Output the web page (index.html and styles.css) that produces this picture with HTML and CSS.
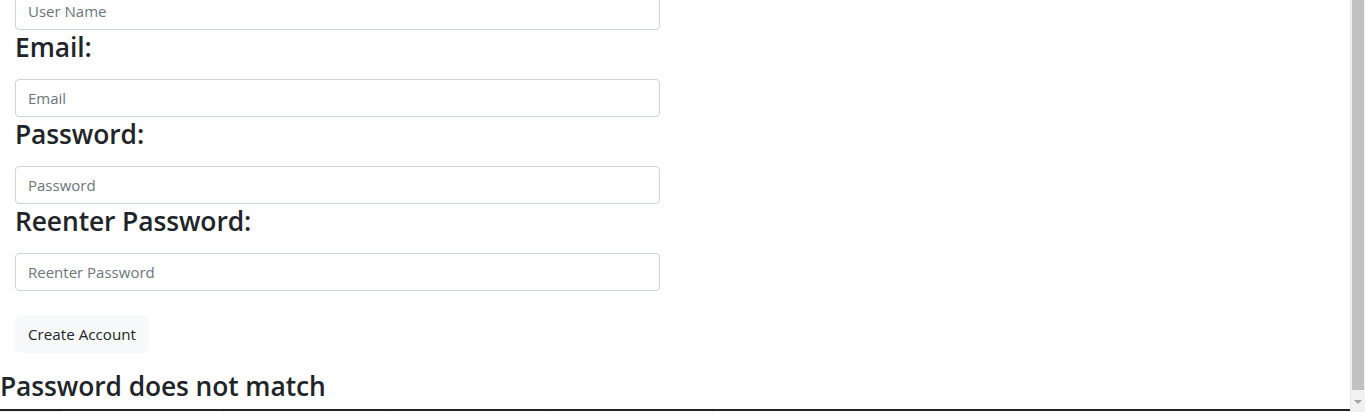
FILE: index.html
```html
<!DOCTYPE html>
<html lang="en">
<head>
<meta charset="utf-8">
<title>Create Account</title>
<link rel="stylesheet" href="styles.css">
</head>
<body>
<div class="page">
  <form class="signup">
    <input class="field" type="text" placeholder="User Name">
    <label class="field-label">Email:</label>
    <input class="field" type="email" placeholder="Email">
    <label class="field-label">Password:</label>
    <input class="field" type="password" placeholder="Password">
    <label class="field-label">Reenter Password:</label>
    <input class="field" type="password" placeholder="Reenter Password">
    <button class="btn-create" type="button">Create Account</button>
  </form>
  <h3 class="error">Password does not match</h3>
  <table class="list">
    <thead>
      <tr><th class="c1"></th><th></th><th></th><th></th><th></th><th class="rest"></th></tr>
    </thead>
  </table>
</div>
<div class="scrollbar"><div class="thumb"></div><div class="arrow"></div></div>
</body>
</html>
```

FILE: styles.css
```css
html, body {
  margin: 0;
  padding: 0;
  height: 100%;
  overflow: hidden;
  background: #fff;
}
body {
  font-family: "Open Sans", "Noto Sans", sans-serif;
  color: #212529;
}
.page {
  margin-top: -8px;
  width: 1350px;
}
.signup {
  display: flex;
  flex-direction: column;
  align-items: flex-start;
  padding: 0 15px;
}
.field {
  box-sizing: border-box;
  width: 645px;
  height: 38px;
  margin: 0;
  padding: 6px 12px;
  border: 1px solid #ced4da;
  border-radius: 4px;
  font-family: "Open Sans", sans-serif;
  font-size: 15px;
  color: #495057;
  background: #fff;
  outline: none;
}
.field::placeholder {
  color: #6c757d;
  opacity: 1;
}
.field-label {
  display: block;
  height: 34px;
  line-height: 34px;
  margin: 0 0 15px 0;
  font-size: 26.4px;
  font-weight: 600;
  letter-spacing: -0.1px;
}
.btn-create {
  margin-top: 24px;
  box-sizing: border-box;
  width: 134px;
  height: 38px;
  padding: 0 12px;
  border: 1px solid #f8f9fa;
  border-radius: 4px;
  background: #f8f9fa;
  color: #212529;
  font-family: "Open Sans", sans-serif;
  font-size: 15.2px;
  white-space: nowrap;
}
.error {
  margin: 16px 0 6px 0;
  height: 34px;
  line-height: 34px;
  font-size: 26.4px;
  font-weight: 600;
  letter-spacing: -0.1px;
}
.list {
  width: 1350px;
  border-collapse: collapse;
}
.list th {
  height: 20px;
  padding: 0;
  border-top: 2px solid #212529;
  border-left: 1px solid #dee2e6;
  width: 162px;
}
.list th.c1 {
  width: 60px;
  border-left: none;
  background: #e9ecef;
}
.list th.rest {
  width: auto;
}
.scrollbar {
  position: fixed;
  top: 0;
  right: 0;
  width: 15px;
  height: 412px;
  background: #f1f1f1;
  border-left: 1px solid #e6e6e6;
  box-sizing: border-box;
}
.thumb {
  position: absolute;
  left: 1px;
  right: 1px;
  top: 0;
  height: 390px;
  background: #c1c1c1;
}
.arrow {
  position: absolute;
  left: 3px;
  top: 400px;
  width: 0;
  height: 0;
  border-left: 4px solid transparent;
  border-right: 4px solid transparent;
  border-top: 4px solid #a3a3a3;
}
```
